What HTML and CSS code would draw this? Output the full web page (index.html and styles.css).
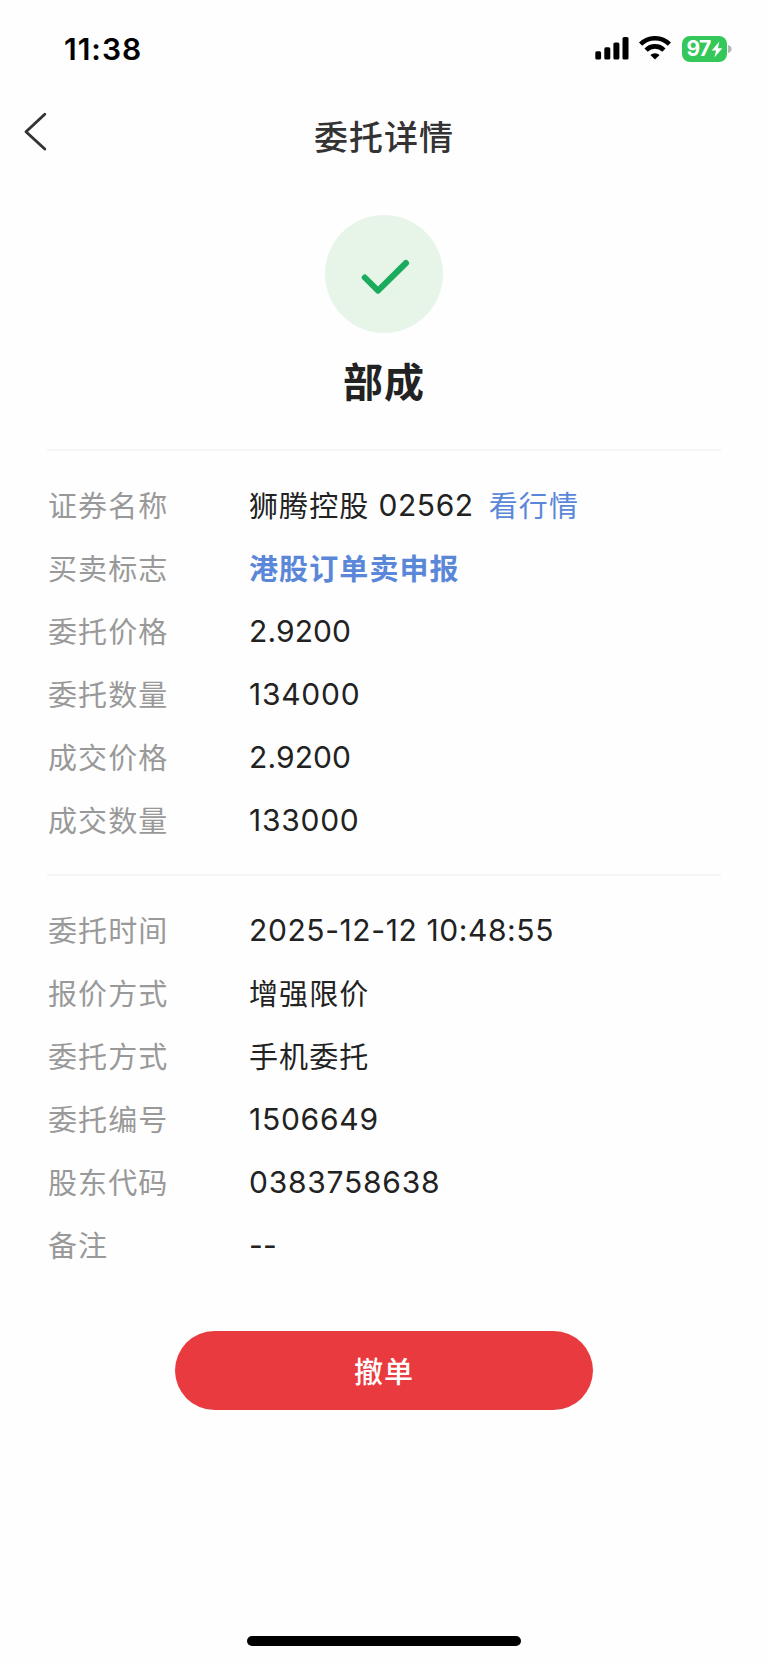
FILE: index.html
```html
<!DOCTYPE html>
<html lang="zh-CN">
<head>
<meta charset="utf-8">
<title>委托详情</title>
<link rel="stylesheet" href="styles.css">
</head>
<body>
<div class="screen">
  <header class="status">
    <span class="time">11:38</span>
    <div class="indicators">
      <svg class="signal" width="34" height="23" viewBox="0 0 34 23">
        <rect x="0.3" y="14.2" width="5.8" height="8.3" rx="1.6"/>
        <rect x="9.3" y="10.3" width="6" height="12.2" rx="1.6"/>
        <rect x="18.4" y="5.5" width="6" height="17" rx="1.6"/>
        <rect x="27.5" y="0" width="6" height="22.5" rx="1.6"/>
      </svg>
      <svg class="wifi" width="32" height="24" viewBox="0 0 32 24">
        <path d="M1.6 8.2A20.5 20.5 0 0 1 30.4 8.2M7.1 14.1A12.6 12.6 0 0 1 24.9 14.1" fill="none" stroke="#000" stroke-width="4.6"/>
        <path d="M16 23.6L11.4 19A6.6 6.6 0 0 1 20.6 19Z"/>
      </svg>
      <div class="battery">
        <span class="level">97</span>
        <svg width="12" height="17" viewBox="0 0 12 17"><path d="M8.4 0.6L0.7 9.6H5L3.4 16.4L11.3 7.2H6.9Z" fill="#fff"/></svg>
      </div>
      <svg class="nub" width="4" height="8" viewBox="0 0 4 8"><path d="M0 0Q3.6 1 3.6 4Q3.6 7 0 8Z" fill="#b4b4b4"/></svg>
    </div>
  </header>
  <nav class="nav">
    <svg class="back" width="26" height="42" viewBox="0 0 26 42"><path d="M22.8 3.3L4 20.7L22.8 38" fill="none" stroke="#333" stroke-width="2.9" stroke-linecap="round" stroke-linejoin="round"/></svg>
    <h1 class="title">委托详情</h1>
  </nav>
  <section class="result">
    <div class="badge">
      <svg width="118" height="118" viewBox="0 0 118 118"><path d="M39.8 62.5L53 75.7L81 48" fill="none" stroke="#1aac5c" stroke-width="6" stroke-linecap="round" stroke-linejoin="round"/></svg>
    </div>
    <h2 class="state">部成</h2>
  </section>
  <dl class="details trade">
    <dt>证券名称</dt><dd>狮腾控股<span class="num code">02562</span><a class="link">看行情</a></dd>
    <dt>买卖标志</dt><dd class="side">港股订单卖申报</dd>
    <dt>委托价格</dt><dd class="price">2.9200</dd>
    <dt>委托数量</dt><dd class="num">134000</dd>
    <dt>成交价格</dt><dd class="price">2.9200</dd>
    <dt>成交数量</dt><dd class="num">133000</dd>
  </dl>
  <dl class="details order">
    <dt>委托时间</dt><dd class="num date">2025-12-12 10:48:55</dd>
    <dt>报价方式</dt><dd>增强限价</dd>
    <dt>委托方式</dt><dd>手机委托</dd>
    <dt>委托编号</dt><dd class="num">1506649</dd>
    <dt>股东代码</dt><dd class="num">0383758638</dd>
    <dt>备注</dt><dd class="price">--</dd>
  </dl>
  <button class="cancel">撤单</button>
  <div class="home"></div>
</div>
</body>
</html>
```

FILE: styles.css
```css
* { box-sizing: border-box; margin: 0; padding: 0; }
body { background: #fefefe; color: #222; font-family: Inter, "Noto Sans CJK SC", sans-serif; }
.screen { width: 768px; height: 1663px; display: flex; flex-direction: column; overflow: hidden; }
.status { height: 98px; padding: 0 36px 0 64px; display: flex; justify-content: space-between; align-items: center; }
.time { font-size: 30px; font-weight: 600; color: #000; line-height: 36px; letter-spacing: 1px; }
.indicators { display: flex; align-items: center; }
.signal { margin-top: -1px; }
.wifi { margin: -2px 0 0 10px; }
.battery { width: 45px; height: 26px; margin: 0 0 0 11px; border-radius: 8px; background: #34c759; display: flex; align-items: center; justify-content: center; }
.level { color: #fff; font-size: 21px; line-height: 26px; font-weight: 700; letter-spacing: -0.6px; }
.nub { margin-left: 1px; }
.nav { height: 76px; display: grid; grid-template-columns: 60px 1fr 60px; align-items: center; }
.back { margin: -8px 0 0 22px; }
.title { padding-top: 4px; font-size: 34px; line-height: 50px; letter-spacing: 1px; font-weight: 500; color: #333; text-align: center; }
.result { height: 275px; padding-top: 41px; display: flex; flex-direction: column; align-items: center; }
.badge { width: 118px; height: 118px; border-radius: 50%; background: #e7f5e9; }
.state { margin-top: 20px; font-size: 40px; line-height: 60px; letter-spacing: 1px; font-weight: 700; }
.details { width: 674px; margin-left: 47px; border-top: 2px solid #f5f5f5; display: grid; grid-template-columns: 201px 1fr; grid-auto-rows: 63px; align-items: center; font-size: 29px; line-height: 44px; letter-spacing: 1.1px; padding-left: 1px; }
.trade { padding-top: 22px; height: 425px; }
.order { padding-top: 22px; height: 457px; }
.details dt, .details dd { padding-top: 4px; }
.details dt { color: #999; }
.num { font-size: 30px; letter-spacing: 0.75px; }
.price { font-size: 30px; letter-spacing: 0.1px; }
.date, .code { letter-spacing: 0.6px; }
.details .num, .details .price { padding-top: 0; }
.code { margin-left: 9px; vertical-align: 1px; line-height: 1; }
.link { color: #5b87d9; margin-left: 15px; }
.side { color: #5b87d9; font-weight: 700; }
.cancel { width: 418px; height: 79px; flex: none; align-self: center; padding-top: 4px; border: 0; border-radius: 40px; background: #e93a3f; color: #fff; font: 500 29px/44px Inter, "Noto Sans CJK SC", sans-serif; letter-spacing: 1.1px; }
.home { width: 274px; height: 10px; margin: auto 0 17px; align-self: center; border-radius: 5px; background: #000; }
```
